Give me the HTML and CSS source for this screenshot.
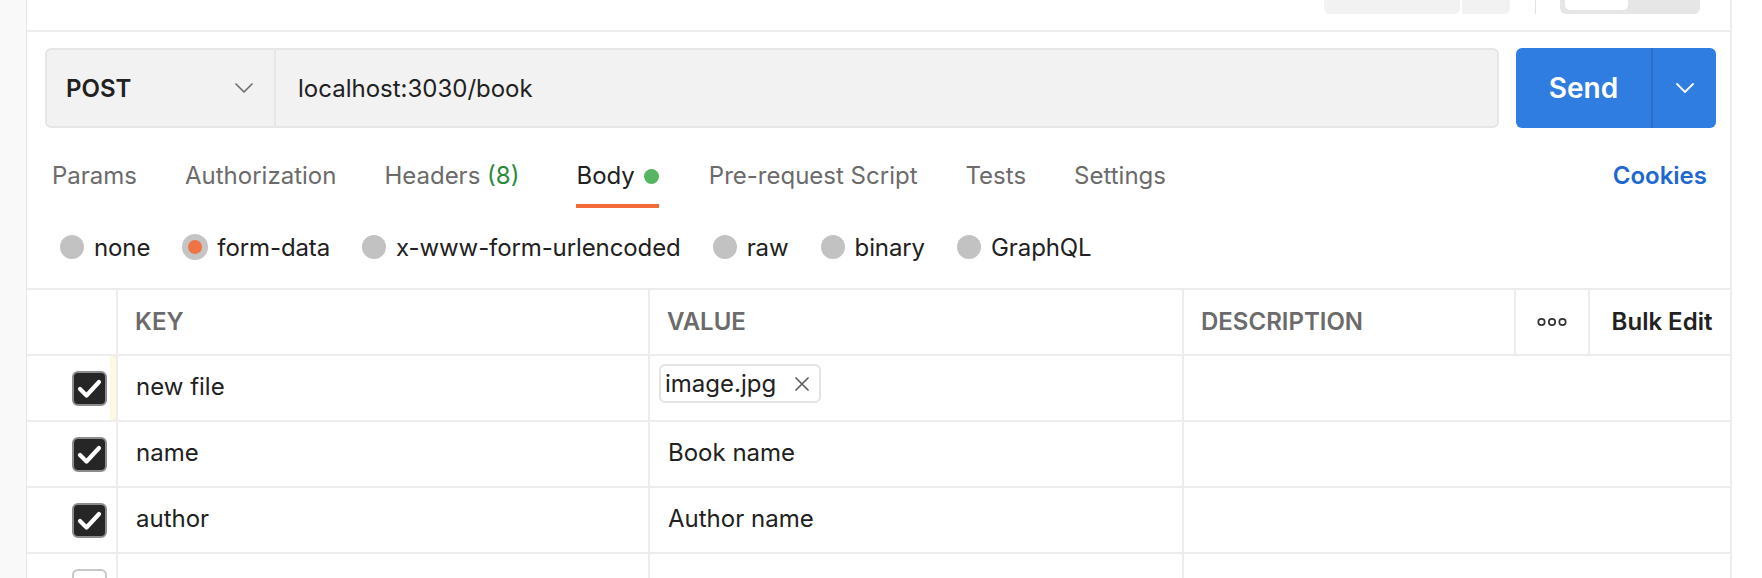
FILE: index.html
```html
<!DOCTYPE html>
<html lang="en">
<head>
<meta charset="utf-8">
<title>POST localhost:3030/book</title>
<link rel="stylesheet" href="styles.css">
</head>
<body>
<div class="app">
  <aside class="rail"></aside>
  <main class="panel">
    <div class="toolbar">
      <div class="tb-group">
        <span class="tb-btn tb-btn-main"></span>
        <span class="tb-btn tb-btn-side"></span>
      </div>
      <span class="tb-divider"></span>
      <div class="tb-toggle"><span class="tb-knob"></span></div>
    </div>

    <div class="request">
      <div class="url-group">
        <div class="method">
          <span>POST</span>
          <svg class="chev" width="18" height="10" viewBox="0 0 18 10"><path d="M1 1l8 8 8-8" fill="none" stroke="#6b6b6b" stroke-width="1.6" stroke-linecap="round" stroke-linejoin="round"/></svg>
        </div>
        <div class="url">localhost:3030/book</div>
      </div>
      <div class="send">
        <span class="send-label">Send</span>
        <span class="send-more">
          <svg width="18" height="10" viewBox="0 0 18 10"><path d="M1 1l8 8 8-8" fill="none" stroke="#fff" stroke-width="1.8" stroke-linecap="round" stroke-linejoin="round"/></svg>
        </span>
      </div>
    </div>

    <nav class="tabs">
      <div class="tab-list">
        <span class="tab">Params</span>
        <span class="tab">Authorization</span>
        <span class="tab tab-headers">Headers <span class="tab-count">(8)</span></span>
        <span class="tab tab-active">Body<span class="dot"></span></span>
        <span class="tab">Pre-request Script</span>
        <span class="tab">Tests</span>
        <span class="tab">Settings</span>
      </div>
      <span class="cookies">Cookies</span>
    </nav>

    <div class="body-types">
      <label class="opt"><span class="radio"></span>none</label>
      <label class="opt"><span class="radio radio-on"><span class="radio-dot"></span></span>form-data</label>
      <label class="opt"><span class="radio"></span>x-www-form-urlencoded</label>
      <label class="opt"><span class="radio"></span>raw</label>
      <label class="opt"><span class="radio"></span>binary</label>
      <label class="opt"><span class="radio"></span>GraphQL</label>
    </div>

    <div class="kv-table">
      <div class="kv-row kv-head">
        <div class="cell cell-check"></div>
        <div class="cell cell-h">KEY</div>
        <div class="cell cell-h">VALUE</div>
        <div class="cell cell-h">DESCRIPTION</div>
        <div class="cell cell-more">
          <svg width="30" height="10" viewBox="0 0 30 10"><circle cx="4.5" cy="5" r="3.2" fill="none" stroke="#333" stroke-width="1.7"/><circle cx="15" cy="5" r="3.2" fill="none" stroke="#333" stroke-width="1.7"/><circle cx="25.5" cy="5" r="3.2" fill="none" stroke="#333" stroke-width="1.7"/></svg>
        </div>
        <div class="cell cell-bulk">Bulk Edit</div>
      </div>

      <div class="kv-row kv-data">
        <div class="cell cell-check">
          <span class="box box-on"><svg width="31" height="31" viewBox="0 0 31 31"><path d="M6 16l6.5 6.5L25 9" fill="none" stroke="#fff" stroke-width="4.2" stroke-linecap="round" stroke-linejoin="round"/></svg></span>
          <span class="handle handle-on"></span>
        </div>
        <div class="cell cell-d">new file</div>
        <div class="cell cell-d cell-file">
          <span class="chip">image.jpg
            <svg width="14" height="14" viewBox="0 0 14 14"><path d="M1 1l12 12M13 1L1 13" stroke="#5f5f5f" stroke-width="1.7" stroke-linecap="round"/></svg>
          </span>
        </div>
        <div class="cell cell-d"></div>
      </div>

      <div class="kv-row kv-data">
        <div class="cell cell-check">
          <span class="box box-on"><svg width="31" height="31" viewBox="0 0 31 31"><path d="M6 16l6.5 6.5L25 9" fill="none" stroke="#fff" stroke-width="4.2" stroke-linecap="round" stroke-linejoin="round"/></svg></span>
          <span class="handle"></span>
        </div>
        <div class="cell cell-d">name</div>
        <div class="cell cell-d">Book name</div>
        <div class="cell cell-d"></div>
      </div>

      <div class="kv-row kv-data">
        <div class="cell cell-check">
          <span class="box box-on"><svg width="31" height="31" viewBox="0 0 31 31"><path d="M6 16l6.5 6.5L25 9" fill="none" stroke="#fff" stroke-width="4.2" stroke-linecap="round" stroke-linejoin="round"/></svg></span>
          <span class="handle"></span>
        </div>
        <div class="cell cell-d">author</div>
        <div class="cell cell-d">Author name</div>
        <div class="cell cell-d"></div>
      </div>

      <div class="kv-row kv-data">
        <div class="cell cell-check">
          <span class="box"></span>
          <span class="handle"></span>
        </div>
        <div class="cell cell-d"></div>
        <div class="cell cell-d"></div>
        <div class="cell cell-d"></div>
      </div>
    </div>
  </main>
</div>
</body>
</html>
```

FILE: styles.css
```css
* { box-sizing: border-box; }

html, body {
  margin: 0;
  padding: 0;
  background: #ffffff;
}

body {
  font-family: Inter, "Noto Sans", "Liberation Sans", sans-serif;
  color: #212121;
}

.app {
  display: flex;
  width: 1762px;
  height: 578px;
  overflow: hidden;
}

.rail {
  width: 27px;
  flex: none;
  background: #f9f9f9;
  border-right: 1px solid #e6e6e6;
}

.panel {
  width: 1705px;
  flex: none;
  border-right: 2px solid #ededed;
}

/* top toolbar (cut off by the viewport) */
.toolbar {
  height: 32px;
  border-bottom: 2px solid #ededed;
  display: flex;
  justify-content: flex-end;
  align-items: flex-start;
  padding-right: 30px;
}

.tb-group {
  display: flex;
  gap: 2px;
}

.tb-btn {
  display: block;
  height: 14px;
  background: #f2f2f2;
}

.tb-btn-main {
  width: 136px;
  border-radius: 0 0 6px 6px;
}

.tb-btn-side {
  width: 48px;
  border-radius: 0 0 6px 0;
}

.tb-divider {
  width: 1px;
  height: 14px;
  background: #e2e2e2;
  margin: 0 24px 0 25px;
}

.tb-toggle {
  width: 140px;
  height: 14px;
  background: #e6e6e6;
  border-radius: 0 0 6px 6px;
  padding-left: 5px;
}

.tb-knob {
  display: block;
  width: 63px;
  height: 10px;
  background: #ffffff;
  border-radius: 0 0 5px 5px;
}

/* request bar */
.request {
  display: flex;
  gap: 17px;
  padding: 16px 14px 0 18px;
}

.url-group {
  flex: 1;
  height: 80px;
  display: flex;
  background: #f2f2f2;
  border: 2px solid #e6e6e6;
  border-radius: 6px;
}

.method {
  width: 229px;
  flex: none;
  display: flex;
  align-items: center;
  justify-content: space-between;
  padding: 0 21px 0 19px;
  border-right: 2px solid #e6e6e6;
  font-size: 24px;
  font-weight: 600;
  color: #212121;
}

.chev { display: block; }

.url {
  display: flex;
  align-items: center;
  padding-left: 22px;
  font-size: 24px;
  color: #212121;
}

.send {
  width: 200px;
  height: 80px;
  flex: none;
  display: flex;
  background: #307de2;
  border-radius: 6px;
  color: #ffffff;
}

.send-label {
  width: 135px;
  display: flex;
  align-items: center;
  justify-content: center;
  font-size: 28px;
  font-weight: 600;
}

.send-more {
  flex: 1;
  display: flex;
  align-items: center;
  justify-content: center;
  border-left: 2px solid #2b70cd;
}

/* tabs */
.tabs {
  display: flex;
  justify-content: space-between;
  padding: 0 23px 0 25px;
  height: 80px;
}

.tab-list {
  display: flex;
  gap: 48px;
}

.tab {
  display: flex;
  align-items: flex-start;
  height: 80px;
  padding-top: 33px;
  line-height: 30px;
  font-size: 24px;
  color: #6b6b6b;
  border-bottom: 4px solid transparent;
  white-space: pre;
}

.tab-headers { margin-right: 9px; }

.tab-count { color: #2a8a3c; }

.tab-active {
  color: #212121;
  border-bottom-color: #f26b3a;
  margin-right: 2px;
}

.dot {
  width: 15px;
  height: 15px;
  border-radius: 50%;
  background: #55b563;
  margin: 8px 0 0 9px;
}

.cookies {
  padding-top: 33px;
  line-height: 30px;
  font-size: 24px;
  font-weight: 600;
  color: #2068d0;
}

/* body types */
.body-types {
  height: 80px;
  display: flex;
  align-items: center;
  gap: 32px;
  padding-left: 33px;
  padding-bottom: 2px;
}

.opt {
  display: flex;
  align-items: center;
  gap: 10px;
  font-size: 24px;
  letter-spacing: -0.1px;
  color: #212121;
}

.radio {
  width: 24px;
  height: 24px;
  border-radius: 50%;
  background: #c2c2c2;
  display: flex;
  align-items: center;
  justify-content: center;
}

.radio-on {
  width: 26px;
  height: 26px;
  margin-right: -1px;
  background: #c4c4c4;
}

.radio-dot {
  width: 14px;
  height: 14px;
  border-radius: 50%;
  background: #ef7345;
}

/* key-value table */
.kv-table {
  border-top: 2px solid #ededed;
}

.kv-row {
  display: grid;
  height: 66px;
  border-bottom: 2px solid #ededed;
}

.kv-head {
  grid-template-columns: 89px 532px 534px 332px 74px 1fr;
}

.kv-data {
  grid-template-columns: 89px 532px 534px 1fr;
}

.cell {
  display: flex;
  align-items: center;
  border-left: 2px solid #ededed;
  min-width: 0;
}

.cell-check {
  border-left: none;
  justify-content: flex-end;
  align-items: center;
}

.cell-h {
  padding-left: 17px;
  padding-bottom: 2px;
  font-size: 24px;
  font-weight: 600;
  color: #6b6b6b;
}

.cell-more {
  justify-content: center;
}

.cell-bulk {
  justify-content: center;
  padding-bottom: 2px;
  font-size: 24px;
  font-weight: 600;
  color: #212121;
  padding-left: 4px;
}

.cell-d {
  padding-left: 18px;
  padding-bottom: 3px;
  font-size: 24px;
  color: #212121;
}

.cell-file {
  padding-left: 9px;
  padding-bottom: 0;
  align-items: flex-start;
}

.chip {
  display: inline-flex;
  align-items: center;
  gap: 19px;
  height: 39px;
  margin-top: 8px;
  padding: 0 10px 0 4px;
  border: 2px solid #e4e4e4;
  border-radius: 6px;
  font-size: 24px;
  color: #212121;
}

.box {
  width: 35px;
  height: 35px;
  flex: none;
  border-radius: 6px;
  border: 2px solid #c8c8c8;
  background: #ffffff;
  display: flex;
  align-items: center;
  justify-content: center;
}

.box-on {
  background: #262626;
  border-color: #8c8c8c;
}

.box svg { display: block; }

.handle {
  width: 6px;
  align-self: stretch;
  margin-left: 3px;
}

.handle-on {
  background: #fdf8e4;
}
```
